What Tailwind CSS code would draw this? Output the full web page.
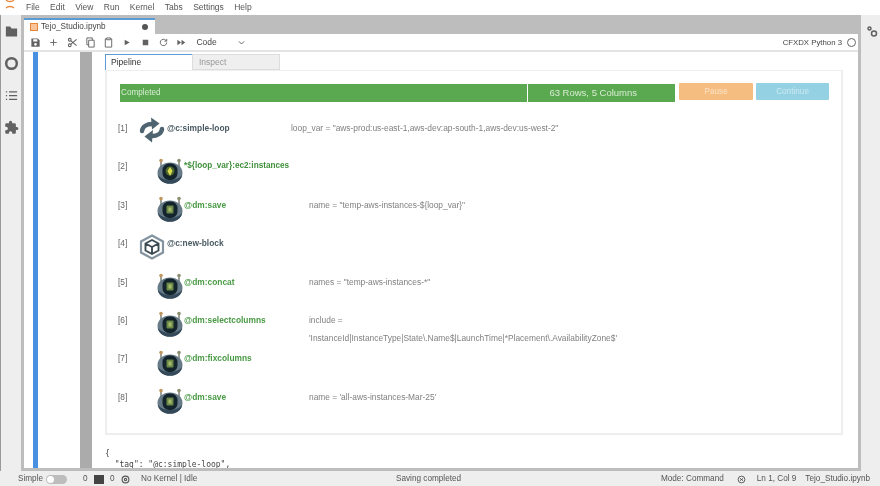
<!DOCTYPE html>
<html><head><meta charset="utf-8"><script src="https://cdn.jsdelivr.net/npm/@tailwindcss/browser@4"></script></head>
<body class="m-0 overflow-hidden bg-white">
<svg class="hidden" width="0" height="0"><defs>
<symbol id="robot" viewBox="0 0 26 26">
<path d="M4 3v7M22 3v7" stroke="#6b6f63" stroke-width="1.300"/><circle cx="4" cy="2.500" r="1.800" fill="#c0975f"/><circle cx="22" cy="2.500" r="1.800" fill="#8a9070"/>
<ellipse cx="13" cy="15" rx="12.500" ry="10.500" fill="#667a88"/><path d="M.8 17c1 5.500 6 8.800 12.200 8.800S24.200 22.500 25.200 17c-3 3.500-7 5-12.200 5S3.800 20.500.8 17z" fill="#34495a"/>
<rect x="5.500" y="5.500" width="15" height="16.500" rx="6.500" fill="#13242c"/><rect x="9.500" y="9.500" width="7" height="8" rx="1" fill="#6b8a48"/><rect x="11.500" y="11.500" width="3" height="4" fill="#a9b96a"/>
</symbol>
<symbol id="robot2" viewBox="0 0 26 26">
<path d="M4 3v7M22 3v7" stroke="#6b6f63" stroke-width="1.300"/><circle cx="4" cy="2.500" r="1.800" fill="#c0975f"/><circle cx="22" cy="2.500" r="1.800" fill="#8a9070"/>
<ellipse cx="13" cy="15" rx="12.500" ry="10.500" fill="#667a88"/><path d="M.8 17c1 5.500 6 8.800 12.200 8.800S24.200 22.500 25.200 17c-3 3.500-7 5-12.200 5S3.800 20.500.8 17z" fill="#34495a"/>
<rect x="5.500" y="5.500" width="15" height="16.500" rx="6.500" fill="#13242c"/><circle cx="13" cy="13" r="4.500" fill="#4f6a2c"/><path d="M13 9l2.500 4-2.500 5-2.500-5z" fill="#d9dc4e"/>
</symbol>
<symbol id="sync" viewBox="0 0 26 26">
<path d="M3 14C3.500 9.500 8 7 13 7" fill="none" stroke="#4e6470" stroke-width="4.500" stroke-linecap="round"/><path d="M12 .5 20.500 6.500 13 12.500z" fill="#4e6470"/>
<path d="M23 12C22.500 16.500 18 19 13 19" fill="none" stroke="#4e6470" stroke-width="4.500" stroke-linecap="round"/><path d="M14 13 5.500 19.500 13 25.500z" fill="#4e6470"/>
</symbol>
<symbol id="cube" viewBox="0 0 26 26">
<path d="M13 1.500 24 7.500v11L13 24.500 2 18.500v-11z" fill="none" stroke="#8494a0" stroke-width="2.200"/>
<path d="M13 6l6.500 3.500v7L13 20l-6.500-3.500v-7zM6.500 9.500 13 13l6.500-3.500M13 13v7" fill="none" stroke="#3c4c55" stroke-width="1.900"/>
</symbol>
</defs></svg>

<div class="w-[880px] h-[486px] flex flex-col overflow-hidden blur-[0.35px] text-[#555] text-[8px] leading-none" style="font-family:'Liberation Sans',Arial,sans-serif">
  <header class="h-[15px] shrink-0 flex items-start bg-white">
    <div class="w-[26px] pl-[5px] -mt-[1px]"><svg width="10" height="12" viewBox="0 0 10 12"><path d="M1 1c2 2 6 2 8 0M1 9c2-2 6-2 8 0" stroke="#e8873a" stroke-width="1.300" fill="none"/></svg></div>
    <nav class="flex gap-[10.400px] pt-[3px] text-[8.500px] text-[#555]">
      <span>File</span><span>Edit</span><span>View</span><span>Run</span><span>Kernel</span><span>Tabs</span><span>Settings</span><span>Help</span>
    </nav>
  </header>
  <div class="flex-1 flex min-h-0 bg-[#eeeeee]">
    <aside class="w-[21px] shrink-0 flex flex-col items-center pt-[9px] gap-[17px] bg-[#eeeeee] border-l border-[#9a9a9a]">
      <svg width="15" height="15" viewBox="0 0 24 24" fill="#616161"><path d="M10 4H3v16h18V7h-9z"/></svg>
      <svg width="15" height="15" viewBox="0 0 24 24" fill="none" stroke="#616161" stroke-width="4"><circle cx="12" cy="12" r="8.500"/></svg>
      <svg width="15" height="15" viewBox="0 0 24 24" fill="none" stroke="#616161" stroke-width="2"><path d="M3 6h2M8 6h13M3 12h2M8 12h13M3 18h2M8 18h13"/></svg>
      <svg width="15" height="15" viewBox="0 0 24 24" fill="#616161"><path d="M20.500 11H19V7a2 2 0 0 0-2-2h-4V3.500a2.500 2.500 0 0 0-5 0V5H4a2 2 0 0 0-2 2v3.800h1.500a2.700 2.700 0 0 1 0 5.400H2V20a2 2 0 0 0 2 2h3.800v-1.500a2.700 2.700 0 0 1 5.400 0V22H17a2 2 0 0 0 2-2v-4h1.500a2.500 2.500 0 0 0 0-5z"/></svg>
    </aside>
    <main class="w-[840px] shrink-0 flex flex-col border-l-[3px] border-r-[3px] border-b-[3px] border-[#bdbdbd] bg-white min-h-0">
      <div class="h-[19px] shrink-0 bg-[#bdbdbd] flex items-end">
        <div class="w-[131px] h-[16px] bg-white border-t-2 border-[#5b9bd5] flex items-center pl-[6px] text-[#444] text-[8.200px]">
          <span class="w-[8px] h-[8px] bg-[#f9c49a] border border-[#e8873a] mr-[3px] shrink-0"></span>
          <span class="flex-1">Tejo_Studio.ipynb</span>
          <span class="w-[6px] h-[6px] rounded-full bg-[#555] mr-[7px]"></span>
        </div>
      </div>
      <div class="h-[18px] shrink-0 border-b-2 border-[#e4e4e4] flex items-center pl-[6px] pr-[2px] pt-[1px]">
        <div class="flex items-center gap-[7.300px]">
          <svg width="11" height="11" viewBox="0 0 24 24" fill="#616161"><path d="M3 3h14l4 4v14H3zM7 5v5h9V5zm5 8a3 3 0 1 0 0 6 3 3 0 0 0 0-6z"/></svg>
          <svg width="11" height="11" viewBox="0 0 24 24" stroke="#616161" stroke-width="2"><path d="M12 5v14M5 12h14"/></svg>
          <svg width="11" height="11" viewBox="0 0 24 24" fill="none" stroke="#616161" stroke-width="2.200"><circle cx="6" cy="6" r="3"/><circle cx="6" cy="18" r="3"/><path d="M8 8l13 11M8 16 21 5"/></svg>
          <svg width="11" height="11" viewBox="0 0 24 24" fill="none" stroke="#616161" stroke-width="2"><path d="M8 7h12v15H8zM16 7V2H4v15h4"/></svg>
          <svg width="11" height="11" viewBox="0 0 24 24" fill="none" stroke="#616161" stroke-width="2"><path d="M8 4H5v18h14V4h-3M8 2h8v4H8z"/></svg>
          <svg width="11" height="11" viewBox="0 0 24 24" fill="#616161"><path d="M8 6l11 6-11 6z"/></svg>
          <svg width="11" height="11" viewBox="0 0 24 24" fill="#616161"><rect x="6" y="6" width="12" height="12"/></svg>
          <svg width="11" height="11" viewBox="0 0 24 24" fill="none" stroke="#616161" stroke-width="2"><path d="M19 12a7 7 0 1 1-2-5l2 2M19 4v5h-5"/></svg>
          <svg width="11" height="11" viewBox="0 0 24 24" fill="#616161"><path d="M3 6l8 6-8 6zM12 6l8 6-8 6z"/></svg>
        </div>
        <span class="ml-[9px] w-[41px] text-[#444] text-[8.500px]">Code</span>
        <svg width="9" height="9" viewBox="0 0 24 24" fill="none" stroke="#616161" stroke-width="2.500"><path d="M5 9l7 7 7-7"/></svg>
        <span class="ml-auto text-[#444] text-[7.800px]">CFXDX Python 3</span>
        <span class="ml-[5px] w-[9px] h-[9px] rounded-full border border-[#666]"></span>
      </div>
      <div class="flex-1 flex min-h-0">
        <div class="w-[9px] shrink-0"></div>
        <div class="w-[5px] shrink-0 bg-[#4a90e2]"></div>
        <div class="w-[42px] shrink-0"></div>
        <div class="w-[12px] shrink-0 bg-[#ababab]"></div>
        <div class="flex-1 pl-[13px] pt-[2px] pr-[15px] min-w-0 overflow-hidden">
          <div class="flex h-[16px]">
            <div class="w-[87px] border-t border-l border-[#5b9bd5] flex items-center pl-[5px] text-[#333] bg-white text-[8.500px]">Pipeline</div>
            <div class="w-[88px] bg-[#efefef] border border-[#dddddd] flex items-center pl-[6px] text-[#999] text-[8.500px]">Inspect</div>
          </div>
          <section class="h-[365px] border-2 border-[#eeeeee] border-t pl-[13px] pr-[12px] pt-[13px]">
            <div class="flex items-start text-[8.200px]">
              <div class="w-[408px] h-[18px] bg-[#5aa84f] text-[#d8ecd4] flex items-center pl-[1px] pt-[1px]">Completed</div>
              <div class="w-[147px] ml-[1px] h-[18px] bg-[#5aa84f] text-[#d8ecd4] flex items-center pl-[21px] text-[9.500px]">63 Rows, 5 Columns</div>
              <div class="w-[74px] ml-[4px] -mt-[1px] h-[17px] pt-[1px] bg-[#f6bd80] text-[#fbe3c8] rounded-[1px] flex items-center justify-center">Pause</div>
              <div class="w-[73px] ml-[3px] -mt-[1px] h-[17px] pt-[1px] bg-[#94d2e3] text-[#cde9f1] rounded-[1px] flex items-center justify-center">Continue</div>
            </div>
            <div class="mt-[7px] -ml-[2px] text-[#808080] text-[8.400px]">
              <div class="h-[38.400px] flex items-center">
                <span class="w-[21px] text-[#666]">[1]</span><svg class="w-[26px] h-[26px] mr-[2px] mt-[4px]"><use href="#sync"/></svg><b class="w-[124px] text-[#4a5a62]">@c:simple-loop</b><span>loop_var = "aws-prod:us-east-1,aws-dev:ap-south-1,aws-dev:us-west-2"</span>
              </div>
              <div class="h-[38.400px] flex items-center">
                <span class="w-[39px] text-[#666]">[2]</span><svg class="w-[26px] h-[26px] mr-[1px] mt-[8px]"><use href="#robot2"/></svg><b class="text-[#3f8f3a] text-[8.200px]">*${loop_var}:ec2:instances</b>
              </div>
              <div class="h-[38.400px] flex items-center">
                <span class="w-[39px] text-[#666]">[3]</span><svg class="w-[26px] h-[26px] mr-[1px] mt-[8px]"><use href="#robot"/></svg><b class="w-[125px] text-[#4a9a45]">@dm:save</b><span>name = "temp-aws-instances-${loop_var}"</span>
              </div>
              <div class="h-[38.400px] flex items-center">
                <span class="w-[21px] text-[#666]">[4]</span><svg class="w-[26px] h-[26px] mr-[2px] mt-[8px]"><use href="#cube"/></svg><b class="text-[#4a5a62]">@c:new-block</b>
              </div>
              <div class="h-[38.400px] flex items-center">
                <span class="w-[39px] text-[#666]">[5]</span><svg class="w-[26px] h-[26px] mr-[1px] mt-[8px]"><use href="#robot"/></svg><b class="w-[125px] text-[#4a9a45]">@dm:concat</b><span>names = "temp-aws-instances-*"</span>
              </div>
              <div class="h-[38.400px] flex items-center">
                <span class="w-[39px] text-[#666]">[6]</span><svg class="w-[26px] h-[26px] mr-[1px] mt-[8px]"><use href="#robot"/></svg><b class="w-[125px] text-[#4a9a45]">@dm:selectcolumns</b>
                <span class="relative">include =<span class="absolute left-0 top-[18px] whitespace-nowrap">'InstanceId|InstanceType|State\.Name$|LaunchTime|*Placement\.AvailabilityZone$'</span></span>
              </div>
              <div class="h-[38.400px] flex items-center">
                <span class="w-[39px] text-[#666]">[7]</span><svg class="w-[26px] h-[26px] mr-[1px] mt-[8px]"><use href="#robot"/></svg><b class="text-[#4a9a45]">@dm:fixcolumns</b>
              </div>
              <div class="h-[38.400px] flex items-center">
                <span class="w-[39px] text-[#666]">[8]</span><svg class="w-[26px] h-[26px] mr-[1px] mt-[8px]"><use href="#robot"/></svg><b class="w-[125px] text-[#4a9a45]">@dm:save</b><span>name = 'all-aws-instances-Mar-25'</span>
              </div>
            </div>
          </section>
          <pre class="mt-[13px] text-[8px] leading-[11px] text-[#444]" style="font-family:'DejaVu Sans Mono',monospace">{
  "tag": "@c:simple-loop",</pre>
        </div>
      </div>
    </main>
    <aside class="flex-1 pt-[11px] pl-[6px] bg-[#eeeeee]">
      <svg width="11" height="12" viewBox="0 0 22 24" fill="none" stroke="#616161" stroke-width="3"><circle cx="5" cy="5" r="3"/><circle cx="14" cy="15" r="5"/></svg>
    </aside>
  </div>
  <footer class="h-[15px] shrink-0 bg-[#eeeeee] flex items-center text-[#555] pl-[18px] pr-[10px] pt-[1px] text-[8.200px]">
    <span class="w-[24px]">Simple</span>
    <span class="ml-[4px] w-[21px] h-[9px] rounded-full bg-[#bdbdbd] flex items-center pl-[1px]"><span class="w-[7px] h-[7px] rounded-full bg-white"></span></span>
    <span class="ml-[16px] w-[5px]">0</span>
    <span class="ml-[6px] w-[10px] h-[9px] bg-[#444]"></span>
    <span class="ml-[6px] w-[5px]">0</span>
    <svg class="ml-[6px]" width="9" height="9" viewBox="0 0 24 24" fill="none" stroke="#555" stroke-width="3"><circle cx="12" cy="12" r="9"/><circle cx="12" cy="12" r="3"/></svg>
    <span class="ml-[11px] w-[57px] whitespace-nowrap">No Kernel | Idle</span>
    <span class="ml-[198px]">Saving completed</span>
    <span class="ml-auto">Mode: Command</span>
    <svg class="ml-[13px]" width="9" height="9" viewBox="0 0 24 24" fill="none" stroke="#555" stroke-width="2.500"><circle cx="12" cy="12" r="9"/><path d="M8 9l8 6M16 9l-8 6"/></svg>
    <span class="ml-[11px]">Ln 1, Col 9</span>
    <span class="ml-[9px]">Tejo_Studio.ipynb</span>
  </footer>
</div>
</body></html>
